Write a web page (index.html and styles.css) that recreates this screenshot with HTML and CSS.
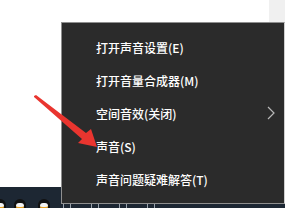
FILE: index.html
```html
<!DOCTYPE html>
<html>
<head>
<meta charset="utf-8">
<link rel="stylesheet" href="styles.css">
</head>
<body>
<div class="screen">
  <div class="corner"></div>
  <div class="taskbar">
    <div class="qq q0"><span class="face"></span></div>
    <div class="qq q1"><span class="face"></span></div>
    <div class="qq q2"><span class="face"></span></div>
    <div class="tray">
      <span class="ti t1"></span>
      <span class="ti t2"></span>
      <span class="ti t3"></span>
      <span class="ti t4"></span>
    </div>
  </div>
  <div class="menu">
    <div class="item">打开声音设置(E)</div>
    <div class="item">打开音量合成器(M)</div>
    <div class="item sub">空间音效(关闭)
      <svg class="chev" width="8" height="14" viewBox="0 0 8 14"><path d="M1 1 L7 7 L1 13" fill="none" stroke="#b8b8b8" stroke-width="1.2"/></svg>
    </div>
    <div class="item">声音(S)</div>
    <div class="item">声音问题疑难解答(T)</div>
  </div>
  <svg class="arrow" width="100" height="160" viewBox="0 0 100 160">
    <path d="M34 96 L36 95 L86 133 L91 129 L97 147 L78 143 L82 139 L34 97 Z" fill="#e9352f"/>
  </svg>
</div>
</body>
</html>
```
FILE: styles.css
```css
* { box-sizing: border-box; }
html, body { margin: 0; padding: 0; }
body {
  width: 285px;
  height: 208px;
  overflow: hidden;
  background: #ffffff;
  font-family: "Noto Sans CJK SC", "Noto Sans", sans-serif;
}
.screen {
  position: relative;
  width: 285px;
  height: 208px;
}
.corner {
  position: absolute;
  right: 0;
  top: 0;
  width: 16px;
  height: 22px;
  background: #f0f0f0;
}
.taskbar {
  position: absolute;
  left: 0;
  bottom: 0;
  width: 285px;
  height: 21px;
  background: #1d2733;
}
.qq {
  position: absolute;
  top: 12px;
  width: 12px;
  height: 14px;
  border-radius: 6px 6px 4px 4px;
  background: #111;
}
.qq .face {
  position: absolute;
  left: 2px;
  top: 4px;
  width: 8px;
  height: 6px;
  border-radius: 4px;
  background: #f4f4f4;
  border-bottom: 2px solid #e8a020;
}
.q0 { left: -6px; }
.q1 { left: 14px; }
.q2 { left: 38px; }
.tray {
  position: absolute;
  left: 61px;
  bottom: 0;
  width: 224px;
  height: 4px;
  display: flex;
  gap: 20px;
  padding-left: 2px;
}
.ti { display: block; width: 8px; height: 4px; border-left: 1px solid #9aa3ad; border-right: 1px solid #9aa3ad; }
.menu {
  position: absolute;
  left: 61px;
  top: 22px;
  width: 224px;
  height: 182px;
  background: #2b2b2b;
  border: 1px solid #8f8f8f;
  border-right: 1px solid #cfcfcf;
  padding: 8px 0 0 34px;
}
.item {
  height: 33px;
  line-height: 33px;
  font-size: 12px;
  font-weight: 500;
  color: #ffffff;
  white-space: nowrap;
  display: flex;
  align-items: center;
}
.sub { position: relative; }
.chev {
  position: absolute;
  left: 171px;
  top: 9px;
}
.arrow {
  position: absolute;
  left: 0;
  top: 0;
}
```
